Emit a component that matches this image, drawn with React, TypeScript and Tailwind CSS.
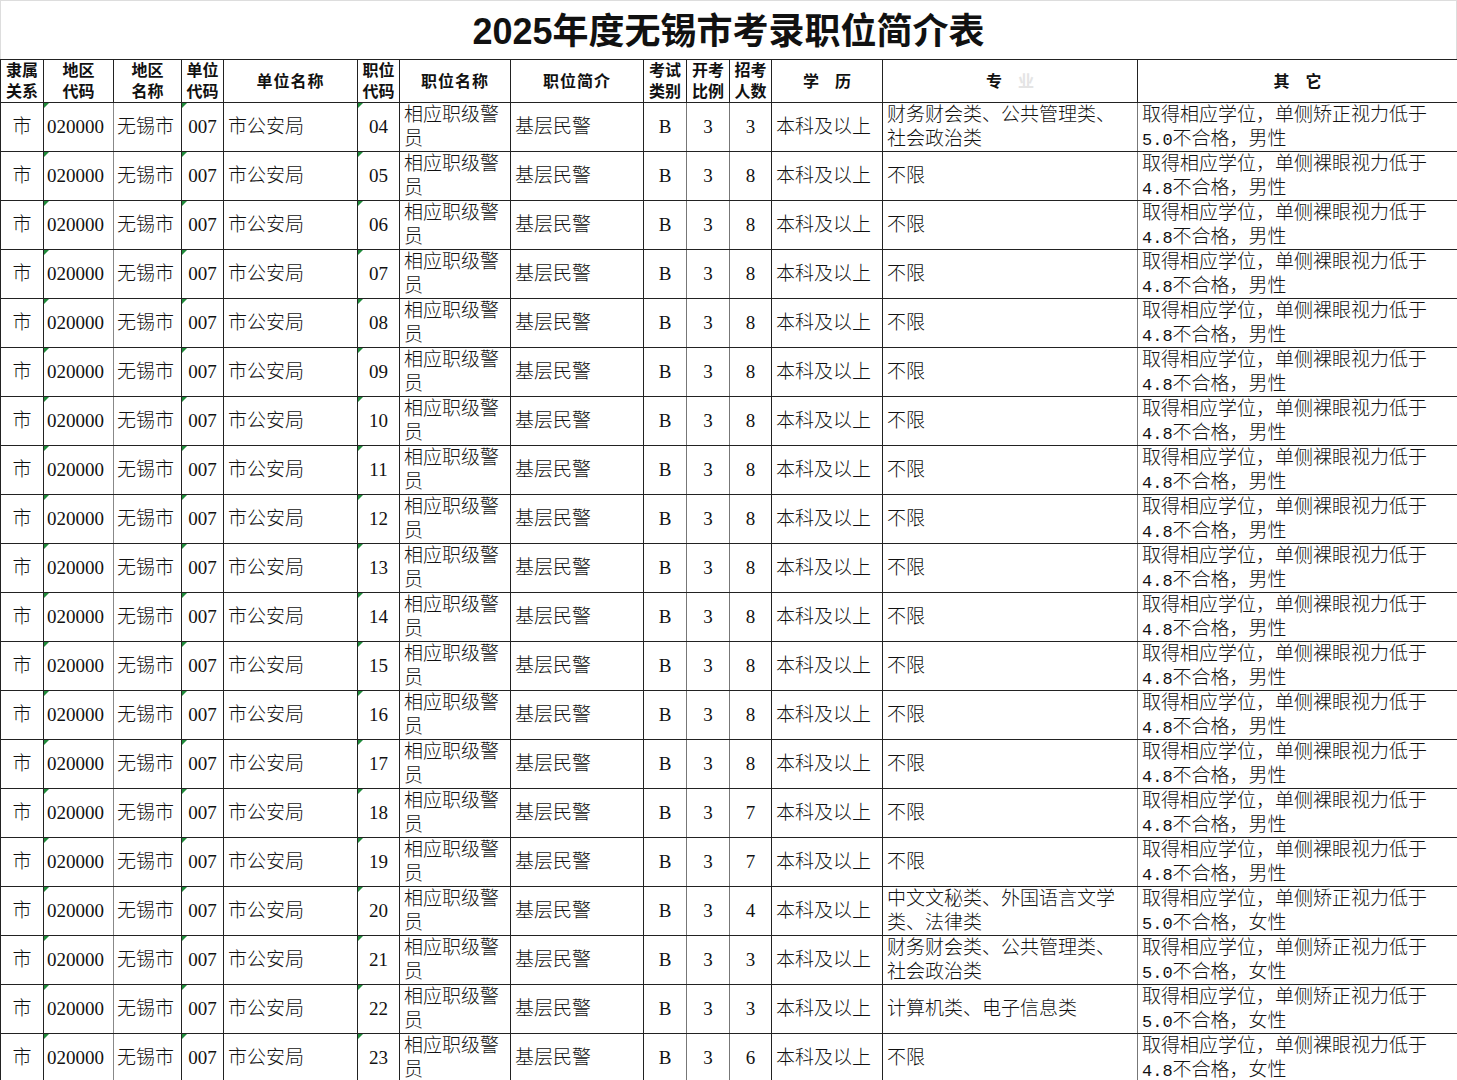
import React from 'react';

interface Row {
  code: string;
  count: string;
  major: string[];
  other: [string, string, string];
}

// 其它 column: [first line, number, rest of second line]
const maleNaked: [string, string, string] = ['取得相应学位，单侧裸眼视力低于', '4.8', '不合格，男性'];
const femaleNaked: [string, string, string] = ['取得相应学位，单侧裸眼视力低于', '4.8', '不合格，女性'];
const maleFixed: [string, string, string] = ['取得相应学位，单侧矫正视力低于', '5.0', '不合格，男性'];
const femaleFixed: [string, string, string] = ['取得相应学位，单侧矫正视力低于', '5.0', '不合格，女性'];
const finance = ['财务财会类、公共管理类、', '社会政治类'];

const rows: Row[] = [
  { code: '04', count: '3', major: finance, other: maleFixed },
  ...['05', '06', '07', '08', '09', '10', '11', '12', '13', '14', '15', '16', '17'].map((code) => ({
    code,
    count: '8',
    major: ['不限'],
    other: maleNaked,
  })),
  { code: '18', count: '7', major: ['不限'], other: maleNaked },
  { code: '19', count: '7', major: ['不限'], other: maleNaked },
  { code: '20', count: '4', major: ['中文文秘类、外国语言文学', '类、法律类'], other: femaleFixed },
  { code: '21', count: '3', major: finance, other: femaleFixed },
  { code: '22', count: '3', major: ['计算机类、电子信息类'], other: femaleFixed },
  { code: '23', count: '6', major: ['不限'], other: femaleNaked },
];

const widths = [43, 70, 68, 42, 134, 42, 111, 133, 43, 43, 42, 111, 255, 320];

const Lines: React.FC<{ lines: string[] }> = ({ lines }) => (
  <>
    {lines.map((l, i) => (
      <div key={i} className="whitespace-nowrap h-[24px]">
        {l}
      </div>
    ))}
  </>
);

const Flag: React.FC = () => (
  <span className="absolute left-0 top-0 w-0 h-0 border-t-[5px] border-r-[5px] border-t-[#1f8a3a] border-r-transparent" />
);

const th = 'border border-[#222] font-bold text-[16px] leading-[21px] text-center align-middle p-0';
const td = 'border border-[#222] text-[19px] leading-[24px] font-light align-middle p-0';

const App: React.FC = () => {
  return (
    <div
      className="w-[1457px] h-[1080px] overflow-hidden bg-white text-[#111]"
      style={{ fontFamily: '"Liberation Serif", "Noto Sans CJK SC", serif' }}
    >
      <div className="h-[59px] border border-b-0 border-[#ddd] flex items-center justify-center">
        <h1
          className="text-[36px] font-bold pt-1"
          style={{ fontFamily: '"Liberation Sans", "Noto Sans CJK SC", sans-serif' }}
        >
          2025年度无锡市考录职位简介表
        </h1>
      </div>
      <table className="table-fixed border-collapse w-[1457px]">
        <colgroup>
          {widths.map((w, i) => (
            <col key={i} style={{ width: w }} />
          ))}
        </colgroup>
        <thead>
          <tr className="h-[43px]">
            <th className={th}>隶属<br />关系</th>
            <th className={th}>地区<br />代码</th>
            <th className={th}>地区<br />名称</th>
            <th className={th}>单位<br />代码</th>
            <th className={th + ' tracking-[1px]'}>单位名称</th>
            <th className={th}>职位<br />代码</th>
            <th className={th + ' tracking-[1px]'}>职位名称</th>
            <th className={th + ' tracking-[1px]'}>职位简介</th>
            <th className={th}>考试<br />类别</th>
            <th className={th}>开考<br />比例</th>
            <th className={th}>招考<br />人数</th>
            <th className={th}>学&nbsp;&nbsp;&nbsp;&nbsp;历</th>
            <th className={th}>
              专&nbsp;&nbsp;&nbsp;&nbsp;<span className="text-[#e4e4e4]">业</span>
            </th>
            <th className={th}>其&nbsp;&nbsp;&nbsp;&nbsp;它</th>
          </tr>
        </thead>
        <tbody>
          {rows.map((r) => (
            <tr key={r.code} className="h-[48.9px]">
              <td className={td + ' text-center'}>市</td>
              <td className={td + ' pl-[3px] relative border-r-[#888]'}>
                <Flag />
                020000
              </td>
              <td className={td + ' pl-[3px]'}>无锡市</td>
              <td className={td + ' text-center relative'}>
                <Flag />
                007
              </td>
              <td className={td + ' pl-[4px]'}>市公安局</td>
              <td className={td + ' text-center relative'}>
                <Flag />
                {r.code}
              </td>
              <td className={td + ' pl-[4px]'}>
                <Lines lines={['相应职级警', '员']} />
              </td>
              <td className={td + ' pl-[4px]'}>基层民警</td>
              <td className={td + ' text-center border-r-[#777]'}>B</td>
              <td className={td + ' text-center border-r-[#777]'}>3</td>
              <td className={td + ' text-center'}>{r.count}</td>
              <td className={td + ' pl-[4px]'}>本科及以上</td>
              <td className={td + ' pl-[4px] border-r-[#777]'}>
                <Lines lines={r.major} />
              </td>
              <td className={td + ' pl-[4px]'}>
                <div className="whitespace-nowrap h-[24px]">{r.other[0]}</div>
                <div className="whitespace-nowrap h-[24px] overflow-hidden">
                  <span
                    className="text-[17px] leading-[0]"
                    style={{ fontFamily: '"Liberation Mono", monospace' }}
                  >
                    {r.other[1]}
                  </span>
                  {r.other[2]}
                </div>
              </td>
            </tr>
          ))}
        </tbody>
      </table>
    </div>
  );
};

export default App;
